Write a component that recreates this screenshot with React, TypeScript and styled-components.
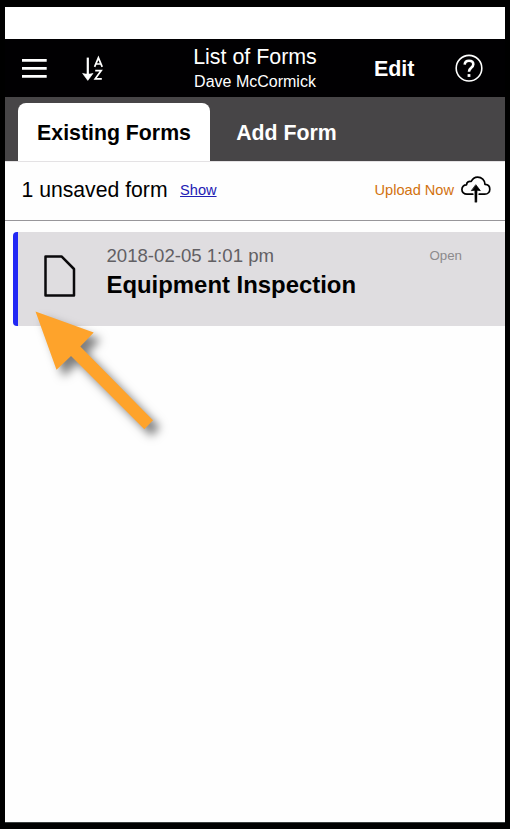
import React from "react";
import styled, { createGlobalStyle } from "styled-components";

const GlobalStyle = createGlobalStyle`
  *, *::before, *::after { box-sizing: border-box; }
  body {
    margin: 0;
    background: #000;
    color: #000;
    font-family: "Liberation Sans", Arial, sans-serif;
    overflow: hidden;
  }
  svg { display: block; flex: none; }
`;

const Frame = styled.div`
  height: 829px;
  width: 510px;
  padding: 7px 5px 6px;
  background: #000;
`;

const Screen = styled.div`
  position: relative;
  height: 816px;
  display: flex;
  flex-direction: column;
  background: #fefefe;
  border-bottom: 1px solid #3b4040;
`;

const StatusBar = styled.div`
  height: 32px;
  background: #fff;
`;

const Header = styled.header`
  height: 58px;
  display: grid;
  grid-template-columns: 154px 1fr 154px;
  align-items: center;
  background: #010002;
  color: #fff;
`;

const HeaderSide = styled.div<{ $end?: boolean }>`
  display: flex;
  align-items: center;
  justify-content: ${(p) => (p.$end ? "flex-end" : "flex-start")};
  gap: ${(p) => (p.$end ? "40.5px" : "34px")};
  padding: ${(p) => (p.$end ? "0 22px 0 0" : "0 0 0 17px")};
`;

const HeaderTitle = styled.div`
  display: flex;
  flex-direction: column;
  align-items: center;
  padding-top: 2px;
  white-space: nowrap;
`;

const Title = styled.h1`
  margin: 0;
  font-size: 21.4px;
  font-weight: 400;
  line-height: 25px;
`;

const Subtitle = styled.div`
  font-size: 16px;
  line-height: 24px;
`;

const EditButton = styled.button`
  padding: 2px 0 0;
  border: 0;
  background: none;
  color: #fff;
  font: bold 21.5px/26px "Liberation Sans", Arial, sans-serif;
`;

const TabBar = styled.nav`
  height: 64px;
  display: flex;
  align-items: flex-end;
  padding-left: 13px;
  background: #474547;
`;

const Tab = styled.button<{ $active?: boolean }>`
  height: 58px;
  width: ${(p) => (p.$active ? "192px" : "153px")};
  padding: 1px 0 0;
  border: 0;
  border-radius: 8px 8px 0 0;
  background: ${(p) => (p.$active ? "#fff" : "transparent")};
  color: ${(p) => (p.$active ? "#000" : "#fff")};
  font: bold 21.3px/26px "Liberation Sans", Arial, sans-serif;
  white-space: nowrap;
`;

const UnsavedBar = styled.div`
  height: 60px;
  display: flex;
  align-items: center;
  padding: 0 14px 2px 16.5px;
  border-top: 1px solid #e4e2e4;
  border-bottom: 1px solid #98969a;
  white-space: nowrap;
`;

const UnsavedText = styled.span`
  font-size: 21.2px;
  line-height: 26px;
`;

const ShowLink = styled.a`
  margin-left: 12.5px;
  color: #2220b4;
  font-size: 14.6px;
  text-decoration: underline;
`;

const UploadLink = styled.div`
  display: flex;
  align-items: center;
  gap: 7px;
  margin-left: auto;
  color: #d2720f;
  font-size: 14.6px;
`;

const FormRow = styled.article`
  height: 94px;
  margin: 11px 0 0 8px;
  display: flex;
  align-items: flex-start;
  padding: 0 43px 0 25px;
  border-left: 5px solid #2228f4;
  border-radius: 4px 0 0 4px;
  background: #dfdde0;
`;

const FormIcon = styled.div`
  width: 63.5px;
  padding-top: 22px;
`;

const FormText = styled.div`
  flex: 1;
  padding-top: 12px;
  white-space: nowrap;
`;

const FormDate = styled.div`
  color: #626064;
  font-size: 18.6px;
  line-height: 24px;
`;

const FormName = styled.div`
  font-size: 23.9px;
  font-weight: 700;
  line-height: 33px;
`;

const FormState = styled.div`
  padding-top: 15px;
  color: #8c8a8d;
  font-size: 13.3px;
  line-height: 17px;
`;

const PointerArrow = styled.svg`
  position: absolute;
  left: 15px;
  top: 293px;
  filter: drop-shadow(7px 7px 5px rgba(0, 0, 0, 0.5));
`;

const MenuIcon = () => (
  <svg width="25" height="20" viewBox="0 0 25 20" fill="none" stroke="#fff" strokeWidth="2.6">
    <path d="M0 2.4h24.7M0 10.4h24.7M0 18.4h24.7" />
  </svg>
);

const SortIcon = () => (
  <svg width="24" height="26" viewBox="0 0 24 26" fill="none" stroke="#fff">
    <path d="M6.8 2.6v17" strokeWidth="2.2" />
    <path d="M1.6 18.4l2.9.6h4.6l2.9-.6-5.2 7z" fill="#fff" strokeWidth=".6" />
    <path d="M13.6 11.8L17.4 2.8l3.8 9M14.9 9h5M14.2 15.6h6l-6 8.2h6.6" strokeWidth="1.7" />
  </svg>
);

const HelpIcon = () => (
  <svg width="28" height="28" viewBox="0 0 28 28" fill="none" stroke="#fff">
    <circle cx="14" cy="14.2" r="12.8" strokeWidth="1.6" />
    <path d="M9.7 10.6c.1-2.5 1.8-3.9 4.3-3.9s4.3 1.4 4.3 3.6c0 2-1.2 2.8-2.4 3.8-1.2.9-1.9 1.6-1.9 3.7" strokeWidth="2.6" />
    <path d="M12.6 20.1h2.8v2.8h-2.8z" fill="#fff" stroke="none" />
  </svg>
);

const CloudUploadIcon = () => (
  <svg width="30" height="28" viewBox="0 0 30 28" fill="none" stroke="#000" strokeWidth="1.7" strokeLinecap="round" strokeLinejoin="round">
    <path d="M11.8 18.2H6C3 18.2.9 16.2.9 13.5c0-2.9 2-4.8 4.7-4.7-.2-2.4 2-4.1 4.6-3.3C11.4 3 13.8 1.2 16.6 1.2c4.1 0 7.2 3 7.4 7.2 2.9.1 4.8 2 4.8 4.8s-2 5-5 5h-5.6" />
    <path d="M13.8 12h2.4l-.3 14.2h-1.8z" fill="#000" stroke="#000" strokeWidth=".4" />
    <path d="M15 9l4.3 5.6-2.4-.3h-3.8l-2.4.3z" fill="#000" strokeWidth=".8" />
  </svg>
);

const DocumentIcon = () => (
  <svg width="34" height="44" viewBox="0 0 34 44" fill="none" stroke="#0a090b" strokeWidth="2.5" strokeLinejoin="round">
    <path d="M2.5 2.4h16L31 15v26.5H2.5z" />
  </svg>
);

export default function App() {
  return (
    <>
      <GlobalStyle />
      <Frame>
        <Screen>
          <StatusBar />
          <Header>
            <HeaderSide>
              <MenuIcon />
              <SortIcon />
            </HeaderSide>
            <HeaderTitle>
              <Title>List of Forms</Title>
              <Subtitle>Dave McCormick</Subtitle>
            </HeaderTitle>
            <HeaderSide $end>
              <EditButton>Edit</EditButton>
              <HelpIcon />
            </HeaderSide>
          </Header>
          <TabBar>
            <Tab $active>Existing Forms</Tab>
            <Tab>Add Form</Tab>
          </TabBar>
          <UnsavedBar>
            <UnsavedText>1 unsaved form</UnsavedText>
            <ShowLink>Show</ShowLink>
            <UploadLink>
              Upload Now
              <CloudUploadIcon />
            </UploadLink>
          </UnsavedBar>
          <FormRow>
            <FormIcon>
              <DocumentIcon />
            </FormIcon>
            <FormText>
              <FormDate>2018-02-05 1:01 pm</FormDate>
              <FormName>Equipment Inspection</FormName>
            </FormText>
            <FormState>Open</FormState>
          </FormRow>
          <PointerArrow width="150" height="150" viewBox="20 300 150 150">
            <path d="M35.5 311.5L93.7 332.5 80.3 346.5 153 420.3 144.3 429.3 71 356 56.5 369.7z" fill="#fea32b" />
          </PointerArrow>
        </Screen>
      </Frame>
    </>
  );
}
